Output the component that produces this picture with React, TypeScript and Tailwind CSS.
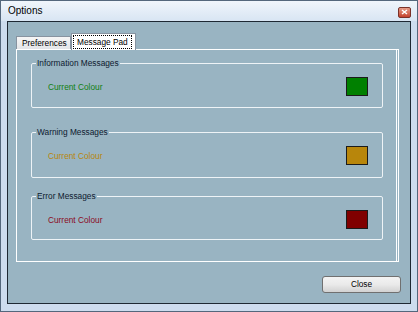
import React from "react";

const groups = [
  { title: "Information Messages", text: "text-[#108010]", swatch: "bg-[#008000]", h: "h-[45px]", mt: "mt-[13px]" },
  { title: "Warning Messages", text: "text-[#b8860b]", swatch: "bg-[#b8860b]", h: "h-[46px]", mt: "mt-[24px]" },
  { title: "Error Messages", text: "text-[#8b0a1e]", swatch: "bg-[#800000]", h: "h-[44px]", mt: "mt-[18px]" },
];

function GroupBox({ g }: { g: (typeof groups)[number] }) {
  return (
    <div className={`relative ${g.mt} ${g.h} w-[352px] rounded-[2px] border border-[#eef3f6]`}>
      <span className="absolute left-[4px] top-[-6px] bg-[#99b4c2] px-[1px] text-[8.3px] leading-[10px] text-[#0d1a2e]">
        {g.title}
      </span>
      <div className="flex items-center justify-between pl-[16px] pr-[14px] pt-[13px]">
        <span className={`text-[8.3px] leading-[10px] ${g.text}`}>Current Colour</span>
        <div className={`h-[19px] w-[22px] border border-[#1b1b1b] ${g.swatch}`} />
      </div>
    </div>
  );
}

export default function App() {
  return (
    <div className="flex h-[312px] w-[418px] flex-col border border-[#54677c] bg-[#cddcee] font-['Liberation_Sans',sans-serif]">
      {/* title bar */}
      <div className="flex h-[20px] items-center justify-between bg-gradient-to-b from-[#f0f5fb] to-[#d8e5f3] pl-[7px] pr-[6px]">
        <span className="text-[10px] leading-none text-black">Options</span>
        <div className="mt-[2px] flex h-[11px] w-[13px] items-center justify-center rounded-[2px] border border-[#7a3128] bg-gradient-to-b from-[#e49a86] to-[#c4402c]">
          <svg width="7" height="6" viewBox="0 0 7 6">
            <path d="M1 1 L6 5 M6 1 L1 5" stroke="white" strokeWidth="1.4" />
          </svg>
        </div>
      </div>

      <div className="flex flex-1 px-[6px] pb-[7px]">
        <div className="flex flex-1 flex-col border border-[#1e2833] bg-[#99b4c2] pl-[8px] pt-[11px]">
          {/* tab strip */}
          <div className="flex h-[16px] items-end">
            <div className="flex h-[13px] w-[55px] items-center border border-b-0 border-[#8793a0] bg-gradient-to-b from-[#f6f6f6] to-[#e3e5e8] pl-[5px] text-[8.3px] leading-none text-black">
              Preferences
            </div>
            <div className="relative z-10 -mb-[1px] flex h-[17px] w-[65px] items-center border border-b-0 border-[#8793a0] bg-white pl-[1px]">
              <span className="flex h-[14px] items-center border border-dotted border-black px-[3px] text-[8.3px] leading-none text-black">
                Message Pad
              </span>
            </div>
          </div>

          {/* tab page */}
          <div className="h-[213px] w-[383px] border border-r-[3px] border-double border-white pl-[14px]">
            {groups.map((g) => (
              <GroupBox key={g.title} g={g} />
            ))}
          </div>

          <div className="flex justify-end pr-[9px] pt-[14px]">
            <button className="flex h-[17px] w-[79px] items-center justify-center rounded-[3px] border border-[#707070] bg-gradient-to-b from-[#f3f3f3] via-[#eaeaea] to-[#d2d2d2] text-[8.3px] leading-none text-black">
              Close
            </button>
          </div>
        </div>
      </div>
    </div>
  );
}
